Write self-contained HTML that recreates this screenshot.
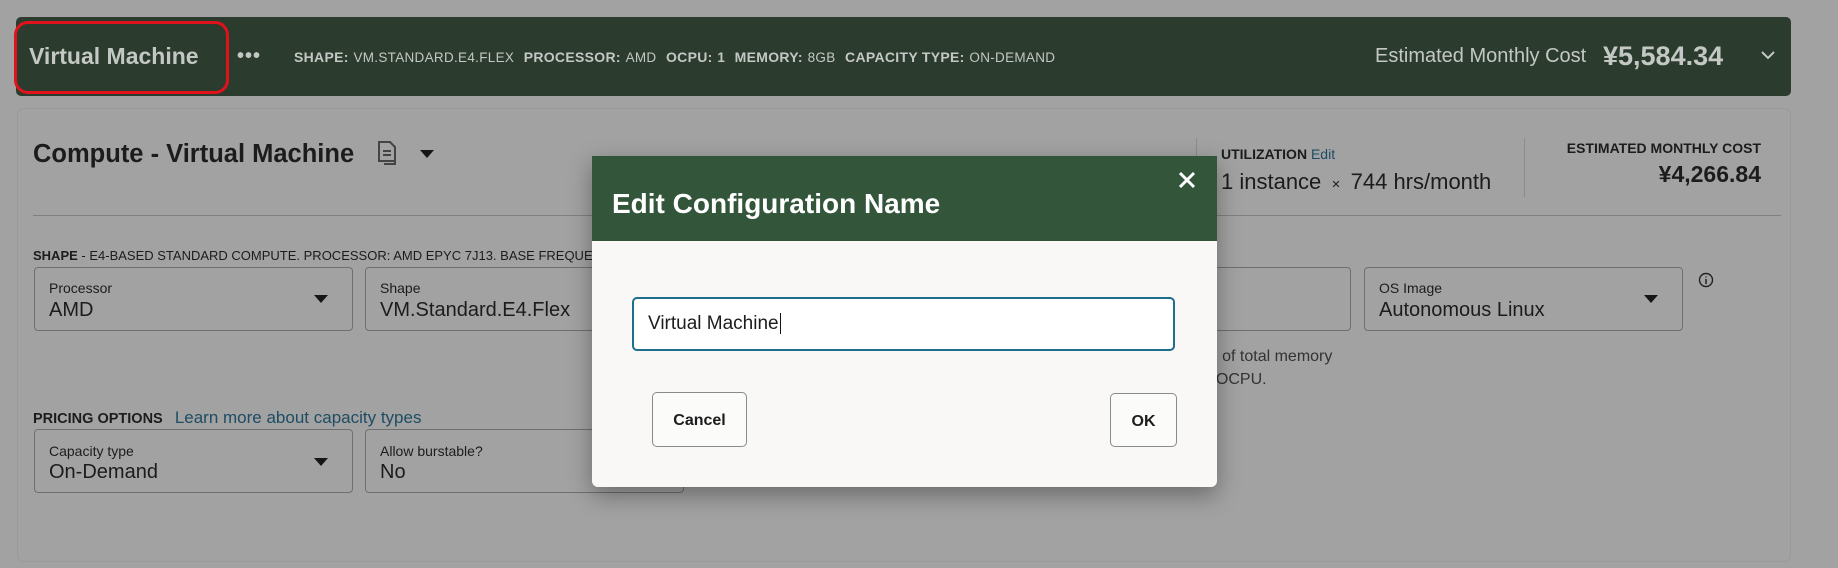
<!DOCTYPE html>
<html><head><meta charset="utf-8"><style>
*{box-sizing:border-box;margin:0;padding:0}
body{width:1838px;height:568px;background:#a2a2a2;font-family:"Liberation Sans",sans-serif;position:relative;overflow:hidden;color:#1c1c1c}
.a{position:absolute;white-space:nowrap}
.bar{left:16px;top:17px;width:1775px;height:79px;background:#2b3b2e;border-radius:5px}
.card{left:17px;top:108px;width:1774px;height:454px;border:1px solid #999;border-radius:6px}
.box{position:absolute;border:1px solid #6f6f6f;border-radius:4px}
.lbl{font-size:14px;color:#1c1c1c}
.val{font-size:20px;color:#1c1c1c}
.caret{position:absolute;width:0;height:0;border-left:7px solid transparent;border-right:7px solid transparent;border-top:8px solid #161616}
.sm{font-size:14px;font-weight:bold;color:#c4c8c4}
.smv{font-size:13.5px;color:#c4c8c4}
</style></head><body>
<div class="a bar"></div>
<div class="a" style="left:14px;top:21px;width:215px;height:73px;border:3px solid #e0121c;border-radius:14px"></div>
<div class="a" style="left:29px;top:43px;font-size:23px;font-weight:bold;color:#c4c8c4">Virtual Machine</div>
<div class="a" style="left:237px;top:45px;font-size:20px;font-weight:bold;color:#c4c8c4;letter-spacing:1px">•••</div>
<div class="a" style="left:294px;top:49px;letter-spacing:0.3px"><span class="sm">SHAPE:</span> <span class="smv">VM.STANDARD.E4.FLEX</span>&nbsp; <span class="sm">PROCESSOR:</span> <span class="smv">AMD</span>&nbsp; <span class="sm">OCPU:</span> <span class="smv" style="font-weight:bold">1</span>&nbsp; <span class="sm">MEMORY:</span> <span class="smv">8GB</span>&nbsp; <span class="sm">CAPACITY TYPE:</span> <span class="smv">ON-DEMAND</span></div>
<div class="a" style="left:1375px;top:45px;font-size:20px;color:#c4c8c4">Estimated Monthly Cost</div>
<div class="a" style="left:1603px;top:41px;font-size:27px;font-weight:bold;color:#c4c8c4">¥5,584.34</div>
<svg class="a" style="left:1761px;top:50px" width="14" height="10"><path d="M1 2 L7 8 L13 2" stroke="#c4c8c4" stroke-width="2" fill="none"/></svg>

<div class="a card"></div>
<div class="a" style="left:33px;top:140px;font-size:25.5px;font-weight:bold">Compute - Virtual Machine</div>
<svg class="a" style="left:376px;top:140px" width="26" height="26"><path d="M3 2h11l5 5v14H3z" fill="none" stroke="#444" stroke-width="2"/><path d="M7 11h8M7 15h8M19 9v15H8" fill="none" stroke="#444" stroke-width="2"/></svg>
<div class="caret" style="left:420px;top:150px"></div>
<div class="a" style="left:1196px;top:138px;width:1px;height:59px;background:#8c8c8c"></div>
<div class="a" style="left:1524px;top:138px;width:1px;height:59px;background:#8c8c8c"></div>
<div class="a" style="left:1221px;top:146px;font-size:14px;font-weight:bold">UTILIZATION <span style="font-weight:normal;color:#1e4c63">Edit</span></div>
<div class="a" style="left:1221px;top:169px;font-size:22px">1 instance <span style="font-size:15px">&nbsp;×&nbsp;</span> 744 hrs/month</div>
<div class="a" style="right:77px;top:140px;font-size:14px;font-weight:bold">ESTIMATED MONTHLY COST</div>
<div class="a" style="right:77px;top:161px;font-size:23px;font-weight:bold">¥4,266.84</div>
<div class="a" style="left:33px;top:215px;width:1748px;height:1px;background:#808080"></div>
<div class="a" style="left:33px;top:248px;font-size:13px"><b>SHAPE</b> - E4-BASED STANDARD COMPUTE. PROCESSOR: AMD EPYC 7J13. BASE FREQUENCY</div>

<div class="box" style="left:34px;top:267px;width:319px;height:64px"><div class="a lbl" style="left:14px;top:12px">Processor</div><div class="a val" style="left:14px;top:31px">AMD</div><div class="caret" style="left:279px;top:27px"></div></div>
<div class="box" style="left:365px;top:267px;width:319px;height:64px"><div class="a lbl" style="left:14px;top:12px">Shape</div><div class="a val" style="left:14px;top:31px">VM.Standard.E4.Flex</div></div>
<div class="box" style="left:1100px;top:267px;width:251px;height:64px"></div>
<div class="box" style="left:1364px;top:267px;width:319px;height:64px"><div class="a lbl" style="left:14px;top:12px">OS Image</div><div class="a val" style="left:14px;top:31px">Autonomous Linux</div><div class="caret" style="left:279px;top:27px"></div></div>
<svg class="a" style="left:1698px;top:272px" width="16" height="16"><circle cx="8" cy="8" r="6.5" fill="none" stroke="#222" stroke-width="1.4"/><path d="M8 7v5M8 4.5v1" stroke="#222" stroke-width="1.5"/></svg>
<div class="a" style="left:1207px;top:345px;font-size:16px;color:#333;line-height:23px">B of total memory<br>&nbsp;&nbsp;OCPU.</div>

<div class="a" style="left:33px;top:408px;font-size:14.5px"><b>PRICING OPTIONS</b>&nbsp;&nbsp;&nbsp;<span style="font-size:17px;color:#1e4c63">Learn more about capacity types</span></div>
<div class="box" style="left:34px;top:429px;width:319px;height:64px"><div class="a lbl" style="left:14px;top:13px">Capacity type</div><div class="a val" style="left:14px;top:31px">On-Demand</div><div class="caret" style="left:279px;top:28px"></div></div>
<div class="box" style="left:365px;top:429px;width:319px;height:64px"><div class="a lbl" style="left:14px;top:13px">Allow burstable?</div><div class="a val" style="left:14px;top:31px">No</div></div>

<div class="a" style="left:592px;top:156px;width:625px;height:331px;background:#f9f8f6;border-radius:0 0 6px 6px;box-shadow:0 8px 24px rgba(0,0,0,.35)">
<div class="a" style="left:0;top:0;width:625px;height:85px;background:#33563b"></div>
<div class="a" style="left:20px;top:32px;font-size:28px;font-weight:bold;color:#fff">Edit Configuration Name</div>
<svg class="a" style="left:586px;top:15px" width="18" height="18"><path d="M2 2L16 16M16 2L2 16" stroke="#fff" stroke-width="3"/></svg>
<div class="a" style="left:40px;top:141px;width:543px;height:54px;border:2px solid #1d6e89;border-radius:5px;background:#fff"></div>
<div class="a" style="left:56px;top:157px;font-size:19px;color:#1c1c1c">Virtual Machine<span style="border-left:1px solid #111;margin-left:1px"></span></div>
<div class="a" style="left:60px;top:236px;width:95px;height:55px;border:1px solid #8a8a8a;border-radius:5px;background:#fbfbfa;font-size:16px;font-weight:bold;text-align:center;line-height:56px">Cancel</div>
<div class="a" style="left:518px;top:237px;width:67px;height:54px;border:1px solid #8a8a8a;border-radius:5px;background:#fbfbfa;font-size:16px;font-weight:bold;text-align:center;line-height:55px">OK</div>
</div>
</body></html>
